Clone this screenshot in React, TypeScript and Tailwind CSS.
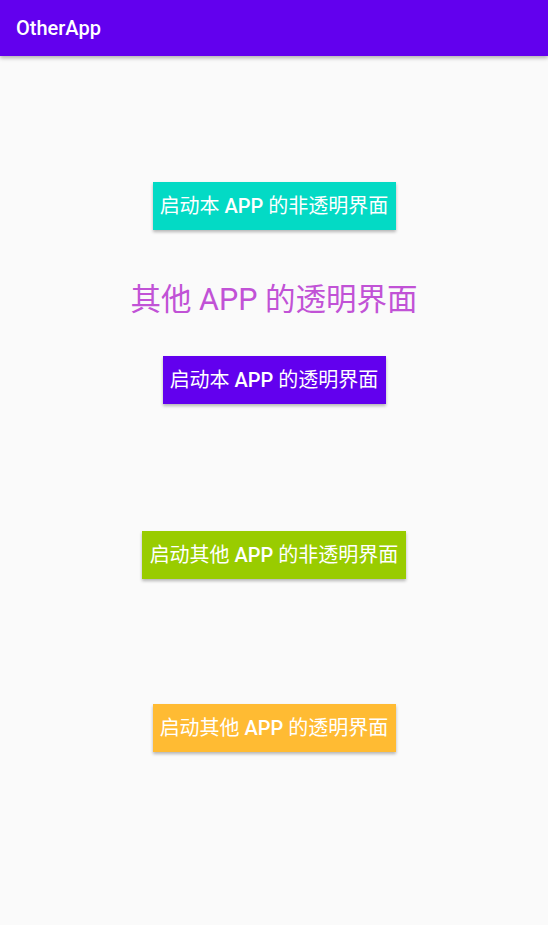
const font = { fontFamily: 'Roboto, "Noto Sans CJK SC", sans-serif' }

function LaunchButton({ before, after, color, width }: { before: string; after: string; color: string; width: string }) {
  return (
    <button
      className={`${color} ${width} h-[48px] text-white text-[20px] leading-none flex items-center justify-center whitespace-pre shadow-[0_2px_3px_rgba(0,0,0,0.28)]`}
    >
      {before}
      <span className="font-medium">APP</span>
      {after}
    </button>
  )
}

export default function App() {
  return (
    <div className="w-[548px] h-[925px] bg-[#fafafa] flex flex-col" style={font}>
      {/* 标题栏 */}
      <header className="h-[56px] bg-[#6200ee] flex items-center px-4 shadow-[0_2px_4px_rgba(0,0,0,0.3)] z-10">
        <span className="text-white text-[20px] font-medium">OtherApp</span>
      </header>

      <main className="flex flex-col items-center">
        <div className="mt-[126px]">
          <LaunchButton before="启动本 " after=" 的非透明界面" color="bg-[#03dac5]" width="w-[243px]" />
        </div>

        <div className="mt-[50px] h-[40px] leading-[40px] text-[30.5px] text-[#c152d6]">
          其他 APP 的透明界面
        </div>

        <div className="mt-[36px]">
          <LaunchButton before="启动本 " after=" 的透明界面" color="bg-[#6200ee]" width="w-[223px]" />
        </div>

        <div className="mt-[127px]">
          <LaunchButton before="启动其他 " after=" 的非透明界面" color="bg-[#99cc00]" width="w-[264px]" />
        </div>

        <div className="mt-[125px]">
          <LaunchButton before="启动其他 " after=" 的透明界面" color="bg-[#ffbb33]" width="w-[243px]" />
        </div>
      </main>
    </div>
  )
}
